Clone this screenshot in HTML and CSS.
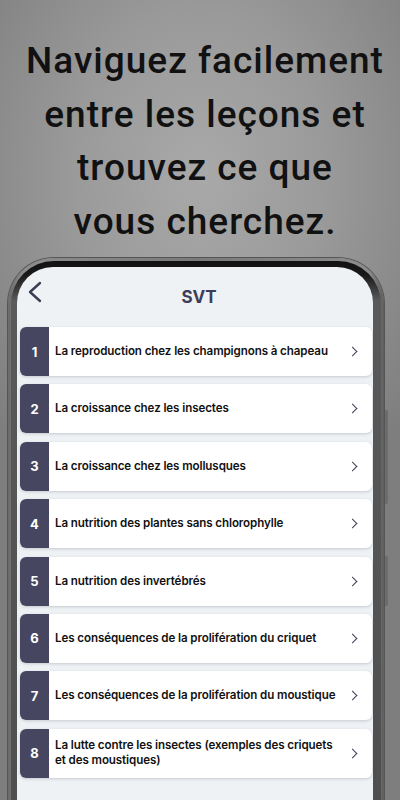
FILE: index.html
```html
<!DOCTYPE html>
<html>
<head>
  <title>SVT - Leçons</title>
  <link rel="stylesheet" href="styles.css">
</head>
<body>
  <div class="page">
    <h1 class="headline">Naviguez facilement<br>entre les leçons et<br>trouvez ce que<br>vous cherchez.</h1>

    <div class="phone">
      <span class="side-btn btn-a"></span>
      <span class="side-btn btn-b"></span>
      <div class="bezel">
        <div class="screen">
          <div class="topbar">
            <svg class="back" width="16" height="22" viewBox="0 0 16 22">
              <path d="M13 2 L3 11 L13 20" fill="none" stroke="#3e3d57" stroke-width="2.4" stroke-linecap="round" stroke-linejoin="round"/>
            </svg>
            <div class="title">SVT</div>
          </div>

          <ul class="lessons">
            <li class="lesson"><span class="num">1</span><span class="name">La reproduction chez les champignons à chapeau</span><span class="chev"></span></li>
            <li class="lesson"><span class="num">2</span><span class="name">La croissance chez les insectes</span><span class="chev"></span></li>
            <li class="lesson"><span class="num">3</span><span class="name">La croissance chez les mollusques</span><span class="chev"></span></li>
            <li class="lesson"><span class="num">4</span><span class="name">La nutrition des plantes sans chlorophylle</span><span class="chev"></span></li>
            <li class="lesson"><span class="num">5</span><span class="name">La nutrition des invertébrés</span><span class="chev"></span></li>
            <li class="lesson"><span class="num">6</span><span class="name">Les conséquences de la prolifération du criquet</span><span class="chev"></span></li>
            <li class="lesson"><span class="num">7</span><span class="name">Les conséquences de la prolifération du moustique</span><span class="chev"></span></li>
            <li class="lesson"><span class="num">8</span><span class="name">La lutte contre les insectes (exemples des criquets et des moustiques)</span><span class="chev"></span></li>
          </ul>
        </div>
      </div>
    </div>
  </div>
</body>
</html>
```

FILE: styles.css
```css
body, html {
  height: 100%;
  margin: 0;
}

body {
  overflow: hidden;
  background: radial-gradient(ellipse 70% 45% at 50% 22%, #a9a9a9 0%, #9a9a9a 45%, #7e7e7e 100%);
  font-family: Roboto, "Liberation Sans", sans-serif;
}

.page {
  height: 800px;
  display: flex;
  flex-direction: column;
}

.headline {
  margin: 34px 0 0;
  padding: 0 0 0 10px;
  font-size: 37px;
  font-weight: 500;
  line-height: 53.5px;
  text-align: center;
  color: #111;
  letter-spacing: 1px;
  white-space: nowrap;
}

.phone {
  position: relative;
  margin: 10px 0 0 8px;
  width: 376px;
  flex: 1;
  box-sizing: border-box;
  padding: 3px 3px 0 3px;
  border-radius: 46px 46px 0 0;
  background: linear-gradient(90deg, #6a6a6a, #8c8c8c 4%, #7a7a7a 50%, #8c8c8c 96%, #5e5e5e);
  box-shadow: 0 0 0 1px #555;
}

.side-btn {
  position: absolute;
  right: -4px;
  width: 3px;
  background: #6c6c6c;
  border-radius: 0 2px 2px 0;
}

.btn-a {
  top: 152px;
  height: 94px;
}

.btn-b {
  top: 298px;
  height: 50px;
}

.bezel {
  height: 100%;
  box-sizing: border-box;
  padding: 6px 8px 0 6px;
  border-radius: 43px 43px 0 0;
  background: linear-gradient(180deg, #111 0, #1a1a1a 14px, #5a5a5a 40px, #4f4f4f);
}

.screen {
  height: 100%;
  box-sizing: border-box;
  padding: 0 1px 0 3px;
  border-radius: 36px 36px 0 0;
  background: #eef2f5;
}

.topbar {
  position: relative;
  height: 60px;
  display: flex;
  align-items: center;
  justify-content: center;
}

.back {
  position: absolute;
  left: 7px;
  top: 14px;
}

.title {
  font-family: Inter, Roboto, sans-serif;
  font-size: 17px;
  font-weight: 700;
  color: #3e3d57;
  margin-left: 6px;
}

.lessons {
  list-style: none;
  margin: 0;
  padding: 0;
  display: flex;
  flex-direction: column;
  gap: 8.4px;
}

.lesson {
  height: 49px;
  display: flex;
  align-items: center;
  background: #fff;
  border-radius: 6px;
  overflow: hidden;
  box-shadow: 0 1px 3px rgba(60, 64, 80, 0.22);
}

.num {
  width: 29px;
  align-self: stretch;
  flex-shrink: 0;
  display: flex;
  align-items: center;
  justify-content: center;
  background: #474660;
  color: #fff;
  font-family: Inter, Roboto, sans-serif;
  font-size: 13px;
  font-weight: 700;
}

.name {
  flex: 1;
  padding-left: 6px;
  font-family: Inter, Roboto, sans-serif;
  font-size: 11.6px;
  font-weight: 600;
  line-height: 15px;
  color: #111;
  letter-spacing: -0.1px;
}

.chev {
  width: 6px;
  height: 6px;
  margin: 0 16px 0 10px;
  border-top: 1.5px solid #3e3d57;
  border-right: 1.5px solid #3e3d57;
  transform: rotate(45deg);
}
```
